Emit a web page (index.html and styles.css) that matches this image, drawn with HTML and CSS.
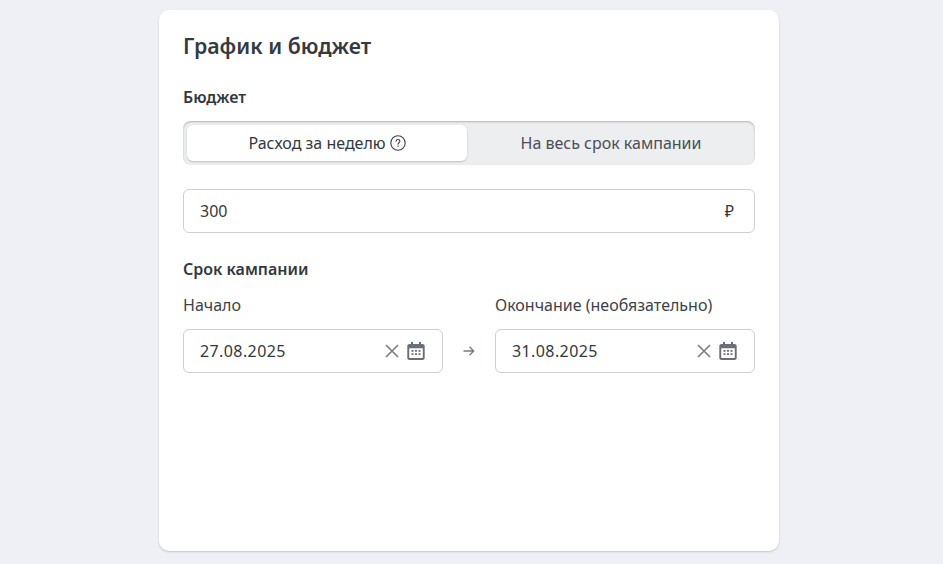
FILE: index.html
```html
<!DOCTYPE html>
<html lang="ru">
<head>
<meta charset="utf-8">
<title>График и бюджет</title>
<link rel="stylesheet" href="styles.css">
</head>
<body>
<main class="card">
  <h1 class="title">График и бюджет</h1>
  <h2 class="section first">Бюджет</h2>
  <div class="segment">
    <div class="seg-item active">Расход за неделю
      <svg class="help" width="16" height="16" viewBox="0 0 16 16" fill="none"><circle cx="8" cy="8" r="7.2" stroke="#3a3f47" stroke-width="1.1"/><path d="M6.1 6.3c0-1.100.9-1.800 1.900-1.800s1.900.7 1.900 1.700c0 1.500-1.900 1.500-1.900 3" stroke="#3a3f47" stroke-width="1.100" stroke-linecap="round"/><circle cx="8" cy="11.300" r=".7" fill="#3a3f47"/></svg>
    </div>
    <div class="seg-item">На весь срок кампании</div>
  </div>
  <div class="input budget"><span>300</span><span class="unit">₽</span></div>
  <h2 class="section">Срок кампании</h2>
  <div class="dates">
    <div class="field">
      <div class="label">Начало</div>
      <div class="input"><span class="date">27.08.2025</span>
        <span class="icons">
          <svg width="16" height="16" viewBox="0 0 16 16" fill="none"><path d="M2 2l12 12M14 2L2 14" stroke="#7b7f87" stroke-width="1.700"/></svg>
          <svg width="18" height="18" viewBox="0 0 18 18"><path fill="#6a6e76" fill-rule="evenodd" d="M4 0h2v2h6V0h2v2h1.500C16.600 2 17.700 2.900 17.700 4v12c0 1.100-1.100 2-2.200 2h-13C1.400 18 .3 17.100.3 16V4c0-1.100 1.100-2 2.200-2H4V0zM2.200 6.200v9.400c0 .2.100.4.300.4h13c.2 0 .3-.2.300-.4V6.200H2.200z"/><path fill="#6a6e76" d="M4.500 8h2v1.700h-2zM8 8h2v1.700H8zM11.500 8h2v1.700h-2zM4.500 11.300h2V13h-2zM8 11.300h2V13H8zM11.500 11.300h2V13h-2z"/></svg>
        </span>
      </div>
    </div>
    <div class="arrow">
      <svg width="12" height="12" viewBox="0 0 12 12" fill="none"><path d="M.5 6h10M6.500 1.800L10.700 6l-4.200 4.200" stroke="#75797f" stroke-width="1.300"/></svg>
    </div>
    <div class="field">
      <div class="label">Окончание (необязательно)</div>
      <div class="input"><span class="date">31.08.2025</span>
        <span class="icons">
          <svg width="16" height="16" viewBox="0 0 16 16" fill="none"><path d="M2 2l12 12M14 2L2 14" stroke="#7b7f87" stroke-width="1.700"/></svg>
          <svg width="18" height="18" viewBox="0 0 18 18"><path fill="#6a6e76" fill-rule="evenodd" d="M4 0h2v2h6V0h2v2h1.500C16.600 2 17.700 2.900 17.700 4v12c0 1.100-1.100 2-2.200 2h-13C1.400 18 .3 17.100.3 16V4c0-1.100 1.100-2 2.200-2H4V0zM2.200 6.200v9.400c0 .2.100.4.300.4h13c.2 0 .3-.2.300-.4V6.200H2.200z"/><path fill="#6a6e76" d="M4.500 8h2v1.700h-2zM8 8h2v1.700H8zM11.500 8h2v1.700h-2zM4.500 11.300h2V13h-2zM8 11.300h2V13H8zM11.500 11.300h2V13h-2z"/></svg>
        </span>
      </div>
    </div>
  </div>
</main>
</body>
</html>
```
FILE: styles.css
```css
* { box-sizing: border-box; }
html, body { margin: 0; height: 100%; }
body {
  background: #eff0f5;
  font-family: "Noto Sans", sans-serif;
  color: #33383f;
  padding: 10px 0 0 159px;
  overflow: hidden;
}
.card {
  width: 620px;
  height: 541px;
  background: #fff;
  border-radius: 10px;
  box-shadow: 0 1px 2px rgba(0, 0, 0, .18);
  padding: 21px 24px;
}
.title {
  margin: 0;
  font-size: 21.300px;
  line-height: 30px;
  font-weight: 600;
  color: #353a40;
}
.section {
  margin: 0;
  font-size: 16px;
  line-height: 20px;
  font-weight: 600;
  color: #33383f;
}
.section.first { margin-top: 26px; }
.section:not(.first) { margin-top: 26px; }
.segment {
  display: flex;
  gap: 4px;
  height: 44px;
  margin-top: 14px;
  padding: 4px;
  background: #edeef0;
  border-radius: 8px;
  box-shadow: inset 0 1px 2px rgba(0, 0, 0, .25);
}
.seg-item {
  flex: 1;
  display: flex;
  align-items: center;
  justify-content: center;
  gap: 4px;
  font-size: 16px;
  color: #4a4f58;
}
.seg-item.active {
  background: #fff;
  border-radius: 6px;
  color: #33383f;
  box-shadow: 0 1px 2px rgba(0, 0, 0, .2);
}
.input {
  display: flex;
  align-items: center;
  justify-content: space-between;
  height: 44px;
  padding: 0 16px;
  border: 1px solid #cfd0d4;
  border-radius: 6px;
  background: #fff;
  font-size: 16px;
  color: #33383f;
}
.date { letter-spacing: .4px; }
.budget { margin-top: 24px; }
.unit { font-size: 16px; padding-right: 4px; }
.dates {
  display: flex;
  align-items: flex-end;
  margin-top: 16px;
}
.field { width: 260px; }
.label {
  font-size: 16px;
  line-height: 20px;
  margin-bottom: 14px;
  color: #3d424a;
}
.arrow {
  flex: 1;
  height: 44px;
  display: flex;
  align-items: center;
  justify-content: center;
}
.icons {
  display: flex;
  align-items: center;
  gap: 7px;
  margin-right: 1px;
}
.icons svg, .help { display: block; }
```
